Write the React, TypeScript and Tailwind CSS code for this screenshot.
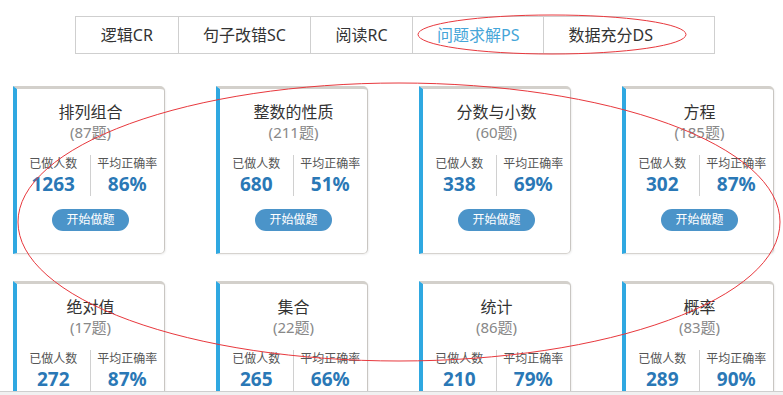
import React from 'react'

type Topic = {
  name: string
  count: number
  done: number
  rate: number
}

const tabs = [
  { label: '逻辑CR', w: 'w-[102px] justify-center' },
  { label: '句子改错SC', w: 'w-[133px] justify-center' },
  { label: '阅读RC', w: 'w-[102px] justify-center' },
  { label: '问题求解PS', w: 'w-[132px] justify-center', active: true },
  { label: '数据充分DS', w: 'w-[171px] justify-start pl-[24px]' },
]

const topics: Topic[] = [
  { name: '排列组合', count: 87, done: 1263, rate: 86 },
  { name: '整数的性质', count: 211, done: 680, rate: 51 },
  { name: '分数与小数', count: 60, done: 338, rate: 69 },
  { name: '方程', count: 185, done: 302, rate: 87 },
  { name: '绝对值', count: 17, done: 272, rate: 87 },
  { name: '集合', count: 22, done: 265, rate: 66 },
  { name: '统计', count: 86, done: 210, rate: 79 },
  { name: '概率', count: 83, done: 289, rate: 90 },
]

const TopicCard = ({ topic }: { topic: Topic }) => (
  <div className="w-[152px] h-[168px] border-l-[4px] border-l-[#2fa8e1] border-t-[3px] border-t-[#d3d0cb] border-r border-r-[#c9c6c2] border-b border-b-[#d6d3cf] rounded-r-[5px] bg-white flex flex-col items-center pt-[12px] shadow-[1px_1px_2px_rgba(0,0,0,0.06)]">
    <div className="text-[16px] leading-[22px] text-[#333]">{topic.name}</div>
    <div className="text-[15px] leading-[19px] text-[#888]">({topic.count}题)</div>
    <div className="w-full grid grid-cols-2 mt-[13px]">
      <div className="flex flex-col items-center border-r border-r-[#d0d0d0]">
        <div className="text-[12px] leading-[18px] text-[#555]">已做人数</div>
        <div className="text-[19px] leading-[23px] font-bold text-[#2a78b6]">{topic.done}</div>
      </div>
      <div className="flex flex-col items-center">
        <div className="text-[12px] leading-[18px] text-[#555]">平均正确率</div>
        <div className="text-[19px] leading-[23px] font-bold text-[#2a78b6]">{topic.rate}%</div>
      </div>
    </div>
    <button className="mt-[13px] w-[77px] h-[22px] rounded-full bg-[#4b94c9] text-white text-[12px] leading-[22px]">
      开始做题
    </button>
  </div>
)

export default function App() {
  return (
    <div
      className="relative w-[783px] h-[395px] overflow-hidden bg-white"
      style={{ fontFamily: '"Noto Sans", "Noto Sans CJK SC", sans-serif' }}
    >
      <div className="h-[391px] overflow-hidden">
        {/* tab bar */}
        <div className="ml-[75px] mt-[16px] flex w-[640px] h-[38px] border border-[#cfcfcf]">
          {tabs.map((t, i) => (
            <div
              key={t.label}
              className={`${t.w} flex items-center text-[16px] ${i > 0 ? 'border-l border-l-[#cfcfcf]' : ''} ${t.active ? 'text-[#45a5d8]' : 'text-[#333]'}`}
            >
              {t.label}
            </div>
          ))}
        </div>

        {/* topic cards */}
        <div className="ml-[13px] mt-[32px] grid grid-cols-[repeat(4,152px)] gap-x-[51px] gap-y-[27px]">
          {topics.map((t) => (
            <TopicCard key={t.name} topic={t} />
          ))}
        </div>
      </div>
      <div className="h-[4px] border-t border-t-[#cfcfcf] bg-[#f1f1f1]" />

      {/* red annotation marks */}
      <svg className="absolute inset-0 pointer-events-none" width="783" height="395">
        <ellipse cx="552" cy="34.5" rx="134" ry="19.5" fill="none" stroke="#e8383d" strokeWidth="1" />
        <ellipse cx="399" cy="222" rx="381" ry="139" fill="none" stroke="#e8383d" strokeWidth="1" />
      </svg>
    </div>
  )
}
